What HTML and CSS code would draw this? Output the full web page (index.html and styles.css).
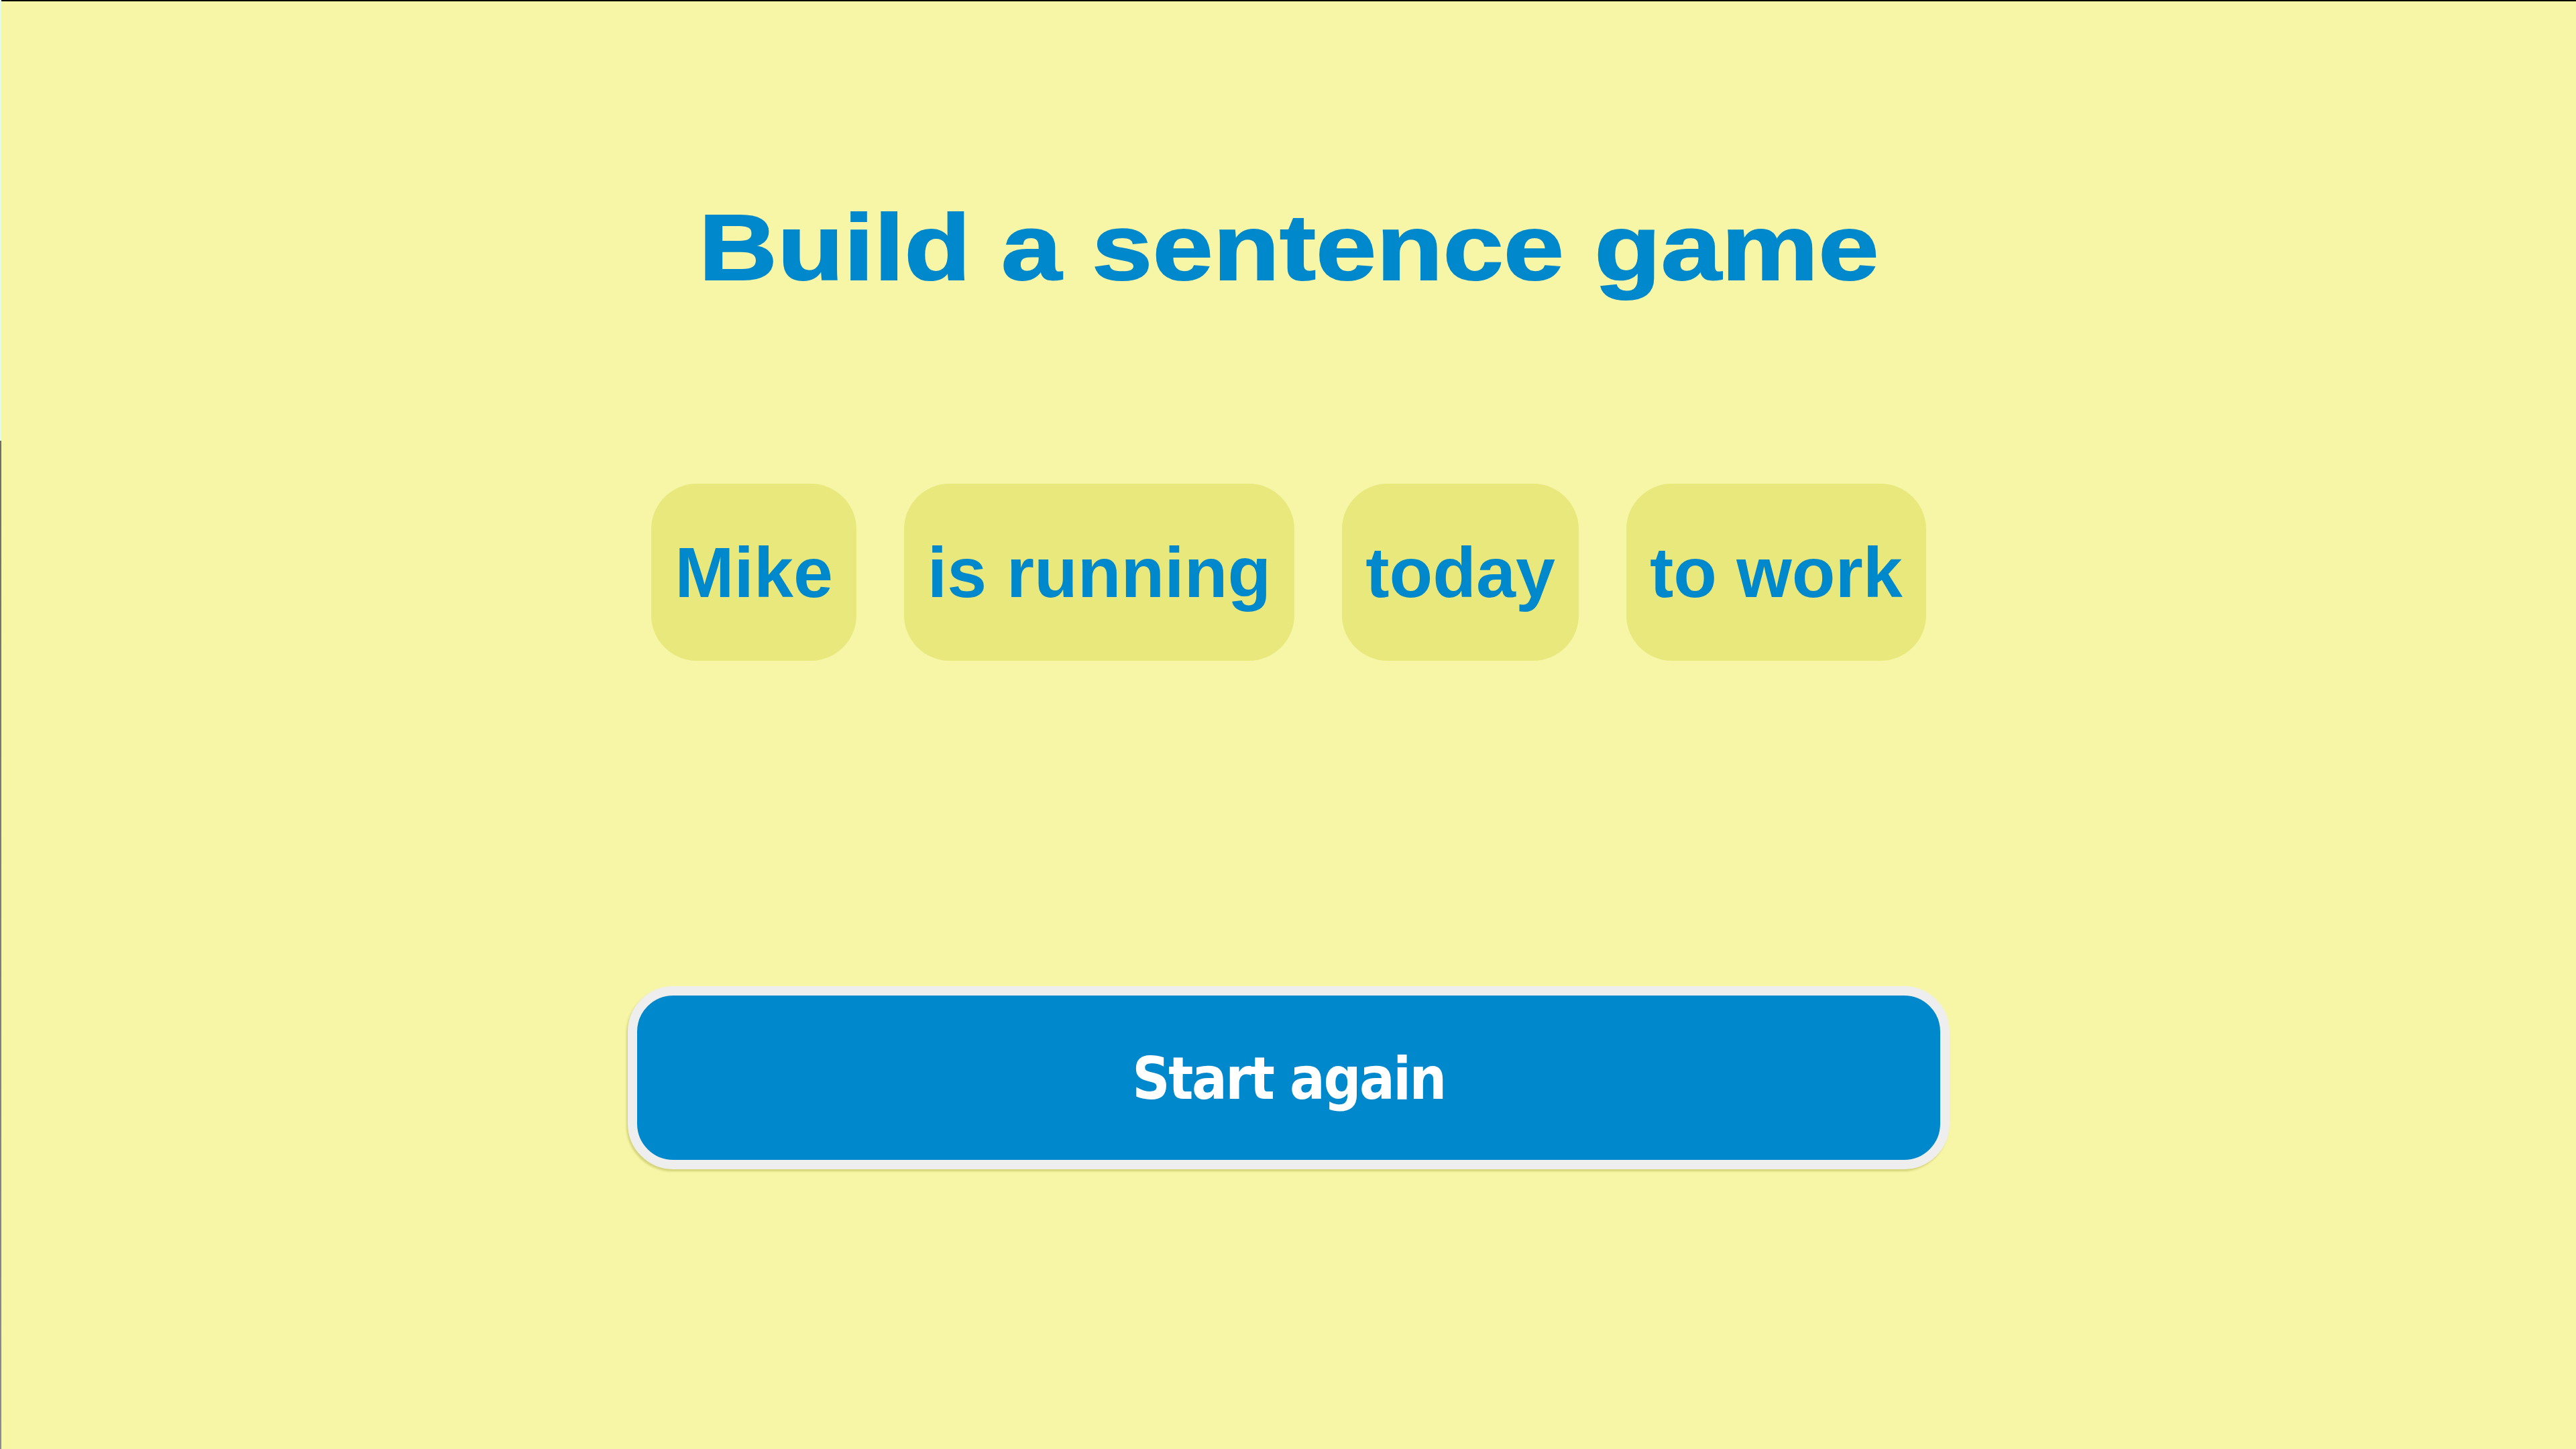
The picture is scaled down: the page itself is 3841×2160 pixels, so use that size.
FILE: index.html
```html
<!DOCTYPE html>
<html lang="en">
<head>
<meta charset="utf-8">
<title>Build a sentence game</title>
<link rel="stylesheet" href="styles.css">
</head>
<body>
<div class="frame">
  <main class="game">
    <h1 class="title"><span class="title-text">Build a sentence game</span></h1>
    <div class="words">
      <div class="word">Mike</div>
      <div class="word">is running</div>
      <div class="word">today</div>
      <div class="word">to work</div>
    </div>
    <button class="restart" type="button">Start again</button>
  </main>
</div>
</body>
</html>
```

FILE: styles.css
```css
html, body {
  margin: 0;
  padding: 0;
  height: 100%;
}

body {
  background-color: #f6f6a6;
  background-image: linear-gradient(to bottom, #dcfcfa 0, #dcfcfa 657px, #6e6e6e 657px, #8a8a9a 100%);
  background-size: 2px 100%;
  background-repeat: no-repeat;
  background-position: left top;
}

.frame {
  margin-left: 2px;
  height: 100%;
  box-sizing: border-box;
  border-top: 2px solid #000;
  background: #f6f6a6;
}

.game {
  display: flex;
  flex-direction: column;
  align-items: center;
  padding-top: 286px;
}

.title {
  margin: 0;
  font-family: "Liberation Sans", Arial, sans-serif;
  font-weight: 700;
  font-size: 140px;
  line-height: 161px;
  color: #0088cc;
  white-space: nowrap;
}

.title-text {
  display: inline-block;
  transform: scaleX(1.16);
  -webkit-text-stroke: 2px #0088cc;
}

.words {
  display: flex;
  gap: 71px;
  margin-top: 272px;
}

.word {
  background: #e8e87c;
  border-radius: 68px;
  padding: 71px 35px;
  font-family: "Liberation Sans", Arial, sans-serif;
  font-weight: 700;
  font-size: 106px;
  line-height: 122px;
  color: #0088cc;
  white-space: nowrap;
}

.restart {
  margin-top: 485px;
  width: 1971px;
  height: 273px;
  box-sizing: border-box;
  border: 14px solid #eeeeee;
  border-radius: 68px;
  background: #0088cc;
  color: #ffffff;
  font-family: "DejaVu Sans Condensed", "DejaVu Sans", sans-serif;
  font-stretch: condensed;
  font-weight: 700;
  font-size: 87px;
  letter-spacing: -2.5px;
  line-height: 1;
  padding: 4px 0 0;
  box-shadow: -2px 3px 3px rgba(150, 150, 40, 0.35);
  cursor: pointer;
}
```
